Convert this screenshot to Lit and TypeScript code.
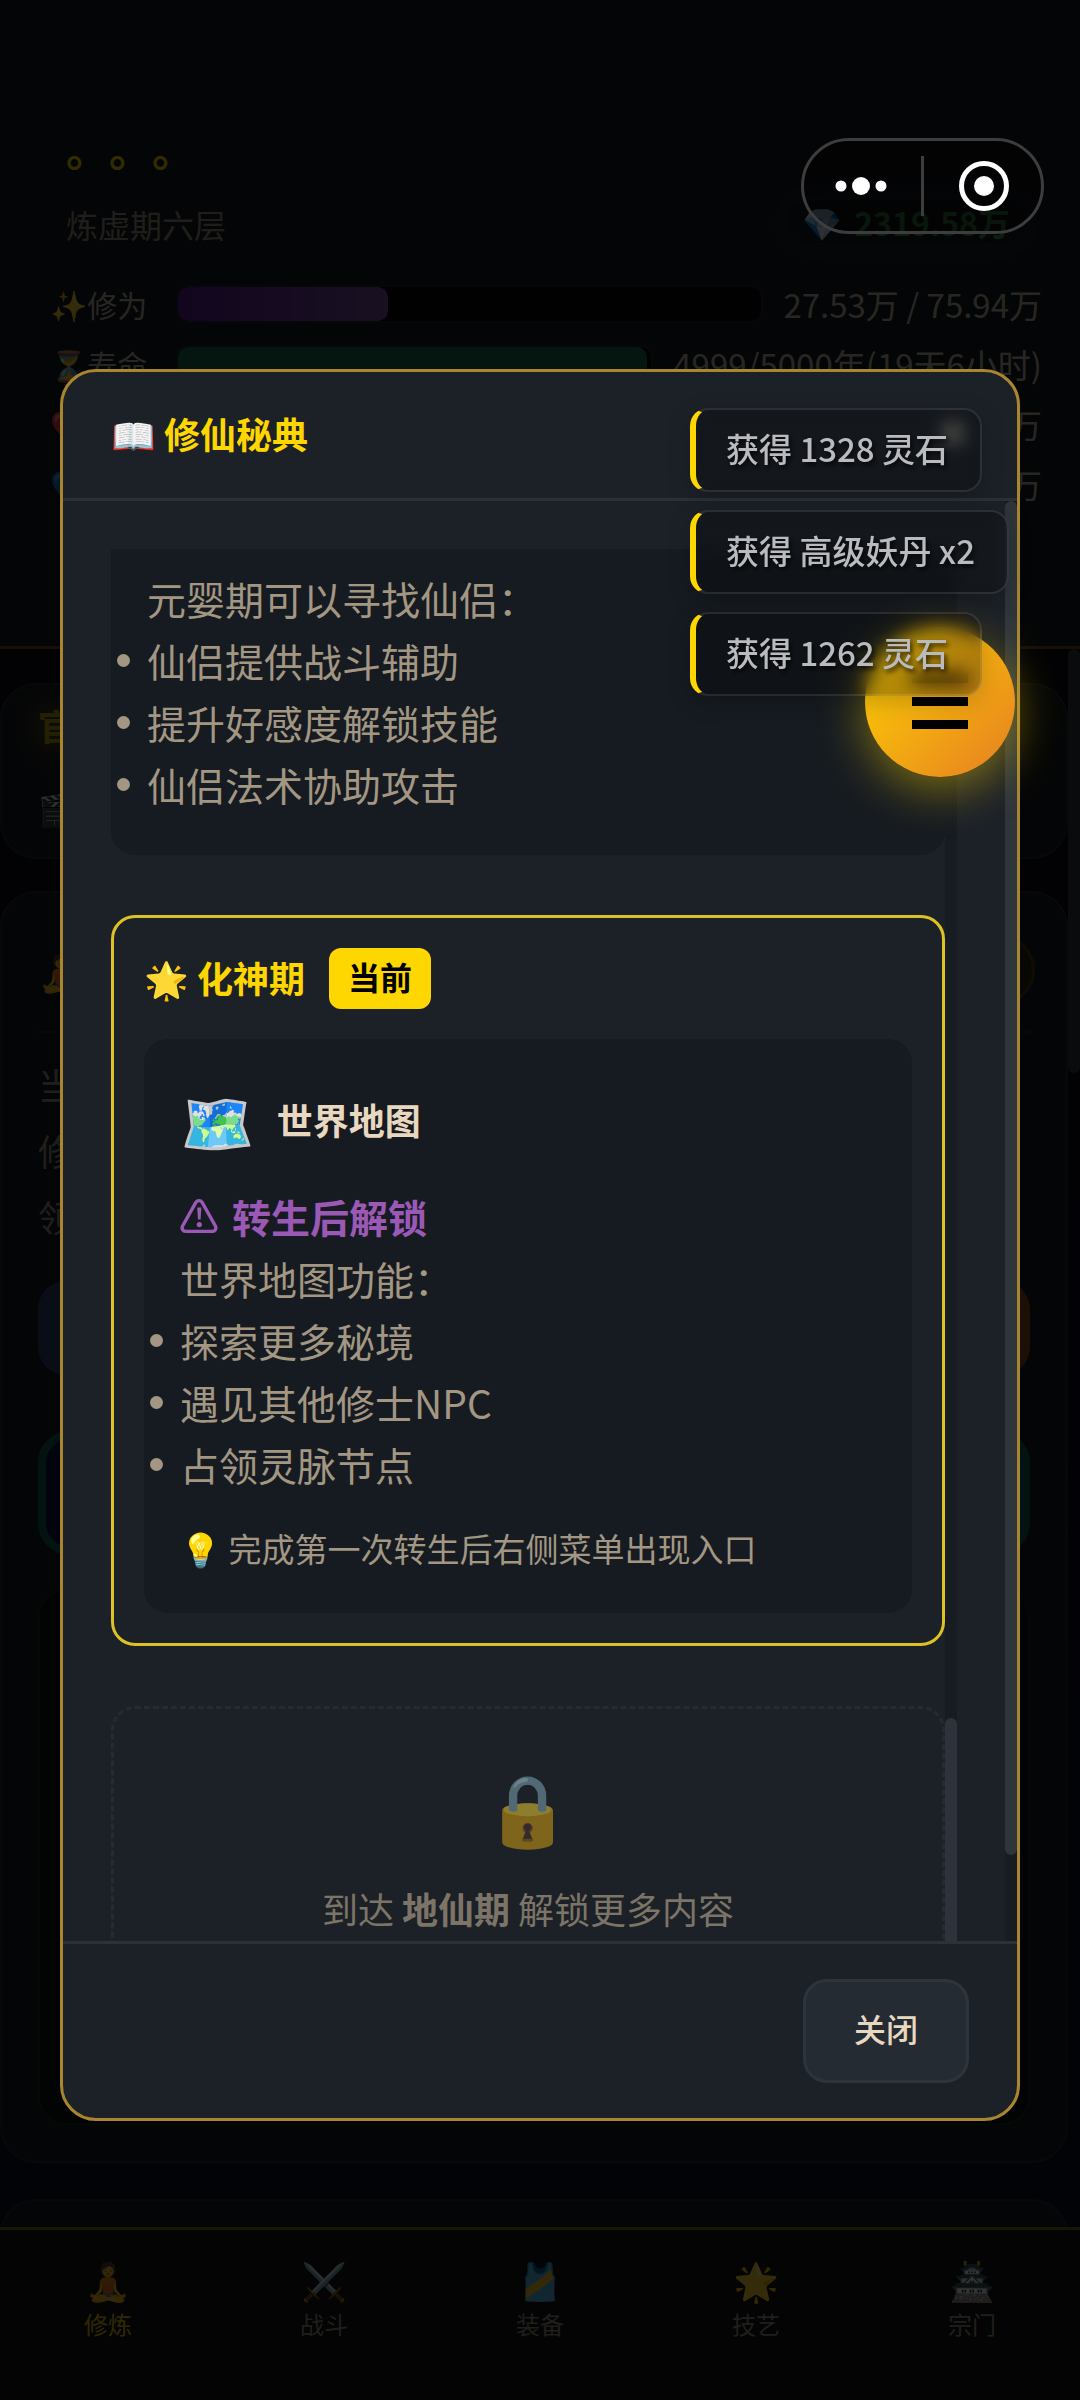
import { LitElement, html, css, svg } from "lit";
import { customElement, property } from "lit/decorators.js";

interface Stat {
  icon: string;
  label: string;
  kind: string;
  percent: number;
  value: string;
}

const STATS: Stat[] = [
  { icon: "✨", label: "修为", kind: "exp", percent: 36, value: "27.53万 / 75.94万" },
  { icon: "⏳", label: "寿命", kind: "life", percent: 99, value: "4999/5000年(19天6小时)" },
  { icon: "❤️", label: "", kind: "plain", percent: 0, value: "万" },
  { icon: "💙", label: "", kind: "plain", percent: 0, value: "万" },
];

const TABS = [
  { icon: "🧘", label: "修炼" },
  { icon: "⚔️", label: "战斗" },
  { icon: "🎽", label: "装备" },
  { icon: "🌟", label: "技艺" },
  { icon: "🏯", label: "宗门" },
];

const TOASTS = ["获得 1328 灵石", "获得 高级妖丹 x2", "获得 1262 灵石"];

const base = css`
  * {
    box-sizing: border-box;
    margin: 0;
    padding: 0;
  }
  button {
    font: inherit;
    color: inherit;
    background: none;
    border: 0;
  }
`;

@customElement("game-page")
class GamePage extends LitElement {
  static styles = [
    base,
    css`
      :host {
        display: flex;
        flex-direction: column;
        height: 100%;
        overflow: hidden;
        background: linear-gradient(180deg, #0a0d14, #0a0d1c 40%, #0c1024);
        color: #c8bfb0;
      }
      .status {
        background: #161a20;
        border-bottom: 3px solid #7a4a14;
        padding: 116px 38px 132px 50px;
      }
      .who {
        display: flex;
        justify-content: space-between;
        align-items: flex-end;
        padding: 0 16px;
        height: 132px;
        margin-bottom: 26px;
      }
      .name {
        font-size: 43px;
        line-height: 64px;
        font-weight: 700;
        color: #ffd700;
        text-spacing-trim: space-all;
      }
      .realm {
        font-size: 32px;
        line-height: 48px;
        color: #a09482;
        margin-top: 20px;
      }
      .stones {
        font-size: 32px;
        line-height: 42px;
        font-weight: 700;
        color: #3f9550;
        display: flex;
        gap: 12px;
        padding: 0 16px;
        border-radius: 20px;
        box-shadow: 0 0 40px rgba(40, 90, 110, 0.4);
        margin-bottom: 5px;
      }
      .stat {
        display: flex;
        align-items: center;
        height: 60px;
        font-size: 33px;
      }
      .label {
        width: 126px;
        font-size: 30px;
        white-space: nowrap;
      }
      .track {
        flex: 1;
        height: 38px;
        border: 2px solid #23262e;
        border-radius: 12px;
        background: #07070d;
        overflow: hidden;
        margin-right: 20px;
      }
      .track.plain {
        visibility: hidden;
      }
      .fill {
        height: 100%;
        border-radius: 10px;
      }
      .exp {
        background: linear-gradient(90deg, #5a1c96, #7c52a8);
      }
      .life {
        background: #16704a;
      }
      .plain {
        background: none;
      }
      main {
        flex: 1;
        min-height: 0;
        overflow: hidden;
        display: flex;
      }
      .cards {
        flex: 1;
        display: flex;
        flex-direction: column;
        gap: 32px;
        padding-top: 34px;
      }
      .bar {
        width: 12px;
      }
      .thumb {
        height: 424px;
        border-radius: 6px;
        background: #34383e;
      }
      .card {
        flex: none;
        border: 2px solid #25292f;
        border-radius: 36px;
        background: #181c21;
        padding: 0 36px;
      }
      .notice {
        height: 176px;
        padding-top: 10px;
      }
      .notice h2 {
        font-size: 36px;
        line-height: 60px;
        color: #ffd700;
        text-shadow: 0 0 30px #ffd700;
        opacity: 0.7;
      }
      .notice p {
        font-size: 32px;
        line-height: 48px;
        margin-top: 28px;
      }
      .train {
        height: 1272px;
        margin-bottom: 4px;
      }
      .head {
        display: flex;
        align-items: center;
        justify-content: space-between;
        height: 140px;
        padding-top: 16px;
        font-size: 36px;
        border-bottom: 2px solid #25292f;
        margin-bottom: 18px;
      }
      .pill {
        width: 160px;
        height: 70px;
        border: 3px solid #4e4410;
        border-radius: 35px;
        background: #2c2810;
        margin-right: -5px;
      }
      .line {
        font-size: 36px;
        line-height: 66px;
        color: #a09482;
      }
      .pair {
        display: flex;
        justify-content: space-between;
        margin-top: 32px;
      }
      .act {
        width: 200px;
        height: 94px;
        border-radius: 28px;
      }
      .blue {
        background: #28436e;
      }
      .orange {
        background: #8a4a10;
      }
      .teal {
        display: block;
        width: 100%;
        height: 124px;
        margin: 56px 0 34px;
        border: 8px solid #126058;
        border-radius: 32px;
        background: linear-gradient(90deg, #0a1440, #0a5a70);
      }
      .log {
        height: 536px;
        border: 2px solid #14281e;
        border-radius: 28px;
        background: #0c0f12;
      }
      nav {
        display: flex;
        height: 173px;
        border-top: 3px solid #7a6a18;
        background: #14181d;
        padding-top: 22px;
      }
      .tab {
        flex: 1;
        display: flex;
        flex-direction: column;
        align-items: center;
        font-size: 24px;
        line-height: 36px;
        height: 92px;
        color: #a09482;
      }
      .tab:first-child {
        color: #e8c400;
      }
      .tab .icon {
        font-size: 37px;
        line-height: 54px;
      }
    `,
  ];

  render() {
    return html`
      <header class="status">
        <div class="who">
          <div>
            <div class="name">。。。</div>
            <div class="realm">炼虚期六层</div>
          </div>
          <div class="stones"><span>💎</span><span>2319.58万</span></div>
        </div>
        ${STATS.map(
          (s) => html`
            <div class="stat">
              <span class="label">${s.icon}${s.label}</span>
              <div class="track ${s.kind === "plain" ? "plain" : ""}">
                <div class="fill ${s.kind}" style="width:${s.percent}%"></div>
              </div>
              <span>${s.value}</span>
            </div>
          `
        )}
      </header>
      <main>
        <div class="cards">
          <section class="card notice">
            <h2>官</h2>
            <p>🎬</p>
          </section>
          <section class="card train">
            <div class="head"><span>🧘</span><span class="pill"></span></div>
            <p class="line">当</p>
            <p class="line">修</p>
            <p class="line">领</p>
            <div class="pair"><span class="act blue"></span><span class="act orange"></span></div>
            <span class="teal"></span>
            <div class="log"></div>
          </section>
          <section class="card notice"></section>
        </div>
        <div class="bar"><div class="thumb"></div></div>
      </main>
      <nav>
        ${TABS.map(
          (t) => html`<button class="tab"><span class="icon">${t.icon}</span>${t.label}</button>`
        )}
      </nav>
    `;
  }
}

@customElement("feature-panel")
class FeaturePanel extends LitElement {
  @property({ type: Array }) items: string[] = [];
  @property() intro = "";

  static styles = [
    base,
    css`
      :host {
        display: block;
      }
      .panel {
        background: #161b21;
        padding: 36px;
        color: #a39783;
        font-size: 39px;
        line-height: 62px;
        border-radius: 24px;
      }
      :host([cut]) .panel {
        border-radius: 0 0 24px 24px;
        padding: 18px 36px 40px;
      }
      ul {
        list-style: none;
      }
      li {
        display: flex;
        align-items: center;
        gap: 17px;
        margin-left: -30px;
      }
      li::before {
        content: "";
        width: 13px;
        height: 13px;
        border-radius: 50%;
        background: currentColor;
      }
    `,
  ];

  render() {
    return html`
      <div class="panel">
        <slot name="top"></slot>
        <p>${this.intro}</p>
        <ul>
          ${this.items.map((i) => html`<li>${i}</li>`)}
        </ul>
        <slot></slot>
      </div>
    `;
  }
}

@customElement("guide-dialog")
class GuideDialog extends LitElement {
  static styles = [
    base,
    css`
      :host {
        display: flex;
      }
      .dialog {
        flex: 1;
        min-width: 0;
        display: flex;
        flex-direction: column;
        background: #1c2128;
        border: 3px solid #a9852f;
        border-radius: 36px;
        overflow: hidden;
      }
      header {
        display: flex;
        justify-content: space-between;
        align-items: center;
        height: 129px;
        padding: 0 48px 4px;
        border-bottom: 3px solid #2c3138;
      }
      h1,
      h2 {
        font-size: 36px;
        line-height: 54px;
        font-weight: 700;
        color: #ffd700;
      }
      .x {
        padding: 4px;
        color: #c8bca6;
      }
      .x svg {
        display: block;
        width: 24px;
        height: 24px;
      }
      .body {
        flex: 1;
        min-height: 0;
        display: flex;
        overflow: hidden;
      }
      .inner {
        flex: 1;
        display: flex;
        padding: 48px 48px 0;
      }
      .list {
        flex: 1;
        display: flex;
        flex-direction: column;
        gap: 60px;
        overflow: hidden;
      }
      .list > * {
        flex: none;
      }
      .track {
        width: 12px;
        background: #171b22;
        display: flex;
        flex-direction: column;
      }
      .thumb-outer {
        height: 94%;
        border-radius: 6px;
        background: #2e353b;
      }
      .thumb-inner {
        height: 16%;
        margin-top: auto;
        border-radius: 6px 6px 0 0;
        background: #2e333b;
      }
      .realm {
        border: 3px solid #dcc224;
        border-radius: 24px;
        padding: 30px;
      }
      .title {
        display: flex;
        align-items: center;
        gap: 24px;
        margin-bottom: 30px;
      }
      .title h2 {
        padding-bottom: 4px;
      }
      .badge {
        font-size: 32px;
        line-height: 49px;
        font-weight: 700;
        color: #000;
        background: #ffd700;
        border-radius: 12px;
        padding: 4px 19px 8px;
      }
      .feature {
        display: flex;
        align-items: center;
        gap: 22px;
        height: 88px;
        margin-bottom: 22px;
      }
      .feature h3 {
        font-size: 36px;
        color: #e8d8c0;
      }
      .map {
        font-size: 60px;
        line-height: 88px;
      }
      .warn {
        display: flex;
        align-items: center;
        gap: 14px;
        font-weight: 700;
        color: #9b59b6;
      }
      .warn svg {
        width: 38px;
        height: 38px;
      }
      .tip {
        font-size: 33px;
        line-height: 54px;
        margin: 26px 0 2px;
      }
      .locked {
        border: 3px dashed #262b32;
        border-radius: 24px;
        padding: 42px 30px 60px;
        display: flex;
        flex-direction: column;
        align-items: center;
      }
      .lock {
        font-size: 70px;
        line-height: 108px;
        opacity: 0.5;
      }
      .locked p {
        font-size: 36px;
        line-height: 54px;
        margin-top: 22px;
        color: #7c7567;
      }
      footer {
        display: flex;
        justify-content: flex-end;
        padding: 35px 48px;
        border-top: 3px solid #2c3138;
      }
      .close {
        font-size: 32px;
        line-height: 48px;
        font-weight: 500;
        color: #e8d8c0;
        padding: 22px 48px 28px;
        border: 3px solid #2e343c;
        border-radius: 24px;
        background: #252b33;
      }
    `,
  ];

  render() {
    return html`
      <div class="dialog" role="dialog" aria-modal="true">
        <header>
          <h1>📖 修仙秘典</h1>
          <button class="x" aria-label="关闭">
            <svg viewBox="0 0 24 24" stroke="currentColor" stroke-width="4">
              <path d="M3 3L21 21M21 3L3 21" />
            </svg>
          </button>
        </header>
        <div class="body">
          <div class="inner">
            <div class="list">
              <feature-panel
                cut
                intro="元婴期可以寻找仙侣："
                .items=${["仙侣提供战斗辅助", "提升好感度解锁技能", "仙侣法术协助攻击"]}
              ></feature-panel>
              <section class="realm">
                <div class="title">
                  <h2>🌟 化神期</h2>
                  <span class="badge">当前</span>
                </div>
                <feature-panel
                  intro="世界地图功能："
                  .items=${["探索更多秘境", "遇见其他修士NPC", "占领灵脉节点"]}
                >
                  <div slot="top">
                    <div class="feature"><span class="map">🗺️</span><h3>世界地图</h3></div>
                    <div class="warn">
                      <svg viewBox="0 0 38 38" fill="none" stroke="currentColor" stroke-width="3.4">
                        <path
                          d="M16 5.2a3.6 3.6 0 0 1 6 0L35.4 29a3.6 3.6 0 0 1-3 5.4H5.600a3.6 3.6 0 0 1-3-5.4Z"
                          stroke-linejoin="round"
                        />
                        <path d="M17.2 10.5h4.2l-.8 12h-2.6Z" fill="currentColor" stroke="none" />
                        <circle cx="19.3" cy="27.6" r="2.6" fill="currentColor" stroke="none" />
                      </svg>
                      转生后解锁
                    </div>
                  </div>
                  <p class="tip">💡 完成第一次转生后右侧菜单出现入口</p>
                </feature-panel>
              </section>
              <section class="locked">
                <span class="lock">🔒</span>
                <p>到达 <strong>地仙期</strong> 解锁更多内容</p>
              </section>
            </div>
            <div class="track"><div class="thumb-inner"></div></div>
          </div>
          <div class="track"><div class="thumb-outer"></div></div>
        </div>
        <footer><button class="close">关闭</button></footer>
      </div>
    `;
  }
}

@customElement("app-root")
class AppRoot extends LitElement {
  static styles = [
    base,
    css`
      :host {
        display: block;
        position: relative;
        height: 100vh;
        min-height: 1600px;
        overflow: hidden;
        background: #000;
        font-family: "Noto Sans CJK SC", "Noto Color Emoji", sans-serif;
      }
      .overlay {
        position: absolute;
        inset: 0;
        display: flex;
        align-items: center;
        padding: 90px 60px 0;
        background: rgba(0, 0, 0, 0.8);
      }
      guide-dialog {
        flex: 1;
        height: 73vh;
      }
      .fab {
        position: absolute;
        top: 627px;
        right: 65px;
        width: 150px;
        height: 150px;
        border-radius: 50%;
        background: linear-gradient(135deg, #ffd700, #e67e22);
        box-shadow: 0 12px 48px rgba(255, 215, 0, 0.45);
        display: flex;
        align-items: center;
        justify-content: center;
      }
      .fab svg {
        width: 56px;
        height: 56px;
      }
      .toasts {
        position: absolute;
        top: 408px;
        left: calc(100% - 390px);
        display: flex;
        flex-direction: column;
        align-items: flex-start;
        gap: 18px;
      }
      .toast {
        font-size: 33px;
        line-height: 50px;
        font-weight: 500;
        color: #b9bbbe;
        text-shadow: 2px 3px 5px rgba(0, 0, 0, 0.8);
        padding: 13px 32px 17px 30px;
        border: 2px solid rgba(255, 255, 255, 0.1);
        border-left: 6px solid #ffd700;
        border-radius: 18px;
        background: rgba(0, 0, 0, 0.28);
        backdrop-filter: blur(9px);
        box-shadow: 0 6px 24px rgba(0, 0, 0, 0.2);
        white-space: nowrap;
      }
      .capsule {
        position: absolute;
        top: 138px;
        right: 36px;
        width: 243px;
        height: 96px;
        border: 3px solid #3d3d3e;
        border-radius: 48px;
        background: rgba(0, 0, 0, 0.25);
        display: flex;
        align-items: center;
      }
      .capsule button {
        flex: 1;
        height: 60px;
      }
      .capsule button + button {
        border-left: 3px solid #3d3d3e;
      }
      .capsule svg {
        width: 60px;
        height: 60px;
      }
    `,
  ];

  render() {
    const bars = [0, 23, 46];
    return html`
      <game-page></game-page>
      <div class="overlay"><guide-dialog></guide-dialog></div>
      <button class="fab" aria-label="菜单">
        <svg viewBox="0 0 56 56">
          ${bars.map((y) => svg`<rect x="0" width="56" y=${y} height="9"></rect>`)}
        </svg>
      </button>
      <div class="toasts" role="status">
        ${TOASTS.map((t) => html`<div class="toast">${t}</div>`)}
      </div>
      <div class="capsule">
        <button aria-label="更多">
          <svg viewBox="0 0 60 60" fill="#fff">
            <circle cx="8" cy="30" r="5.5" />
            <circle cx="28" cy="30" r="9" />
            <circle cx="48" cy="30" r="5.5" />
          </svg>
        </button>
        <button aria-label="退出">
          <svg viewBox="0 0 60 60" fill="none">
            <circle cx="31" cy="30" r="22.5" stroke="#fff" stroke-width="5" />
            <circle cx="31" cy="30" r="10" fill="#fff" />
          </svg>
        </button>
      </div>
    `;
  }
}
